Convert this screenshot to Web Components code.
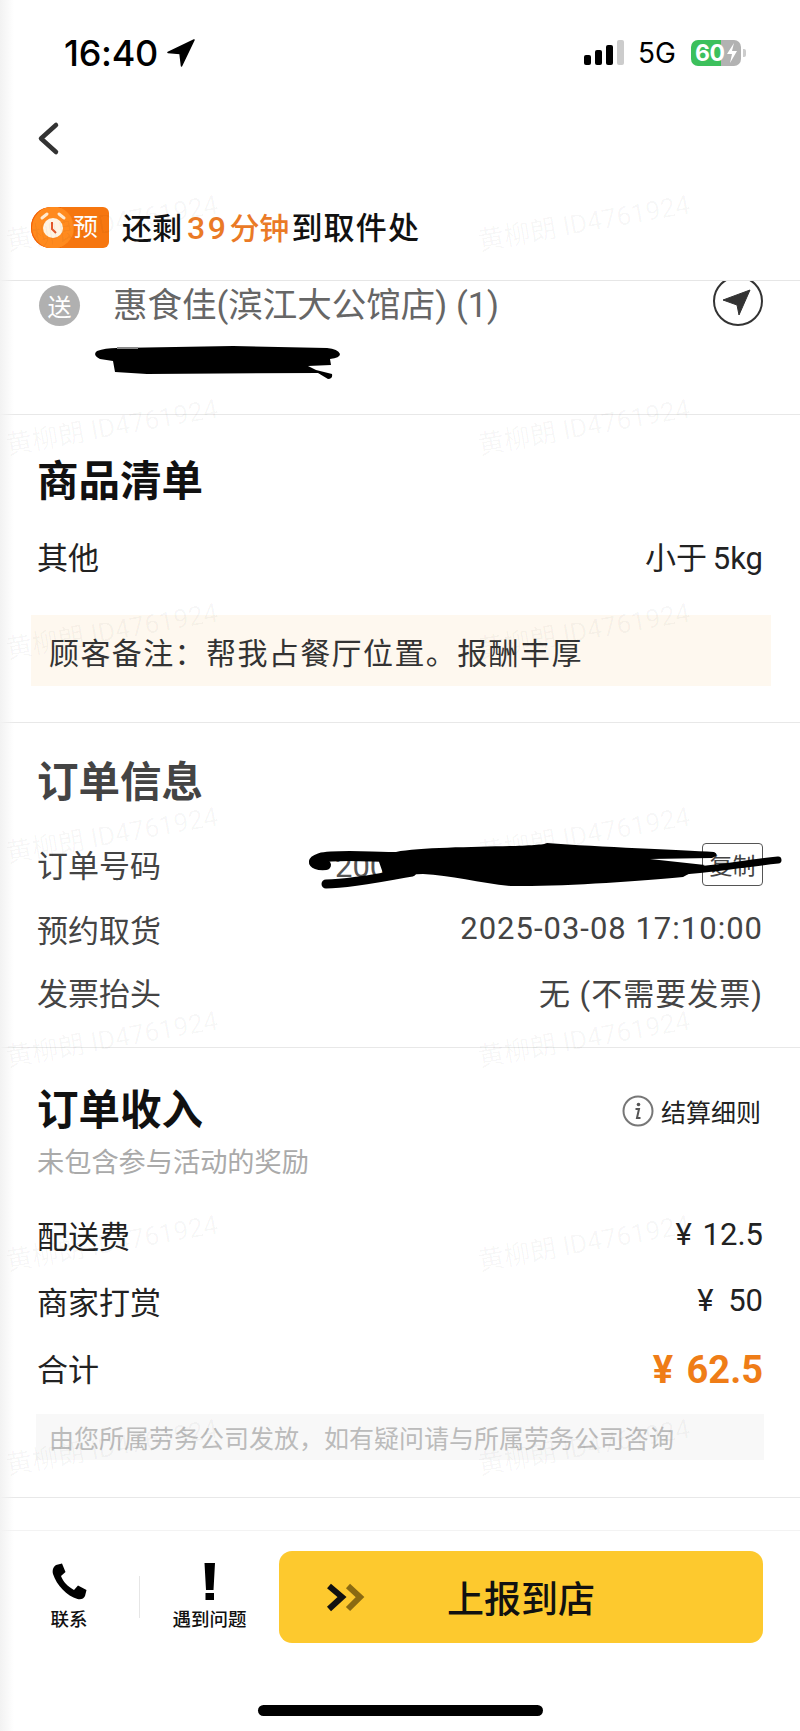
<!DOCTYPE html>
<html lang="zh-CN">
<head>
<meta charset="utf-8">
<title>订单详情</title>
<style>
    html, body { margin: 0; padding: 0; background: #fff; }
    body {
        width: 800px;
        height: 1731px;
        overflow: hidden;
        position: relative;
        font-family: Roboto, "Noto Sans CJK SC", sans-serif;
        color: #222;
    }
    .order-value { display: flex; align-items: center; justify-content: space-between; width: 428px; }
    .order-value span { color: #555; padding-top: 6px; }
    .order-value copy-chip { margin-top: 2px; }
</style>
</head>
<body>
<status-bar></status-bar>
<back-nav></back-nav>
<eta-banner></eta-banner>
<store-row></store-row>

<info-section heading="商品清单" pad-top="42" pad-bottom="36">
    <kv-row label="其他" height="50" style="margin-top:23px;--ws:-2px">小于 5kg</kv-row>
    <note-box>顾客备注：帮我占餐厅位置。报酬丰厚</note-box>
</info-section>

<info-section heading="订单信息" pad-top="35" pad-bottom="25" muted>
    <kv-row label="订单号码" height="66" style="margin-top:22px">
        <div class="order-value"><span>200</span><copy-chip>复制</copy-chip></div>
        <ink-mark view="305 840 480 55" w="480" h="55" x="268" y="9" kind="order"></ink-mark>
    </kv-row>
    <kv-row label="预约取货" style="--ls:1px">2025-03-08 17:10:00</kv-row>
    <kv-row label="发票抬头" height="62" style="--ls:1px">无 (不需要发票)</kv-row>
</info-section>

<info-section heading="订单收入" pad-top="38" pad-bottom="37">
    <settle-link slot="aside">结算细则</settle-link>
    <sub-note>未包含参与活动的奖励</sub-note>
    <kv-row label="配送费" height="66" style="margin-top:18px;--ws:3px">¥ 12.5</kv-row>
    <kv-row label="商家打赏" height="67" style="--ws:7px">¥ 50</kv-row>
    <kv-row label="合计" height="67" total style="--ws:4px">¥ 62.5</kv-row>
    <pay-notice>由您所属劳务公司发放，如有疑问请与所属劳务公司咨询</pay-notice>
</info-section>

<action-bar></action-bar>
<home-bar></home-bar>
<water-marks></water-marks>

<script>
class StatusBar extends HTMLElement {
    constructor() {
        super();
        this.attachShadow({ mode: 'open' });
    }
    connectedCallback() {
        this.shadowRoot.innerHTML = `
            <style>
                :host { display: flex; align-items: center; height: 105px; padding: 0 54px 0 64px; font-family: Inter, Roboto, sans-serif; color: #000; }
                .time { font-size: 36px; font-weight: 500; letter-spacing: -0.3px; }
                .loc { margin-left: 9px; }
                .right { margin-left: auto; display: flex; align-items: center; }
                .bars { display: flex; align-items: flex-end; gap: 4px; height: 25px; }
                .bars i { display: block; width: 7px; background: #000; border-radius: 2px; }
                .net { margin: 0 15px 0 14px; font-size: 28px; font-weight: 400; }
                .batt { position: relative; width: 50px; height: 26px; border-radius: 7px; overflow: hidden; display: flex; align-items: center; background: linear-gradient(to right, #3cc05c 60%, #b2b2b2 60%); color: #fff; font-size: 23px; font-weight: 700; }
                .batt span { margin-left: 4px; letter-spacing: -0.5px; }
                .nub { width: 3px; height: 8px; margin-left: 2px; background: #ccc; border-radius: 0 2px 2px 0; }
            </style>
            <span class="time">16:40</span>
            <svg class="loc" width="28" height="28" viewBox="0 0 28 28"><path d="M27 1 L1 13.5 L13 14.5 L14.5 27 Z" fill="#000" stroke="#000" stroke-width="1.5" stroke-linejoin="round"/></svg>
            <div class="right">
                <div class="bars">
                    <i style="height:10px"></i><i style="height:15px"></i><i style="height:20px"></i><i style="height:25px;background:#ccc"></i>
                </div>
                <span class="net">5G</span>
                <div class="batt"><span>60</span>
                    <svg width="14" height="22" viewBox="0 0 14 22" style="margin-left:1px"><path d="M9 1 L2 12 H7 L5 21 L12 9 H7 Z" fill="#fff"/></svg>
                </div>
                <div class="nub"></div>
            </div>
        `;
    }
}

class BackNav extends HTMLElement {
    constructor() {
        super();
        this.attachShadow({ mode: 'open' });
    }
    connectedCallback() {
        this.shadowRoot.innerHTML = `
            <style>
                :host { display: flex; align-items: center; height: 66px; padding-left: 36px; }
            </style>
            <svg width="24" height="36" viewBox="0 0 24 36"><path d="M20 5 L5 18.5 L20 32" fill="none" stroke="#333" stroke-width="4.5" stroke-linecap="round" stroke-linejoin="round"/></svg>
        `;
    }
}

class EtaBanner extends HTMLElement {
    constructor() {
        super();
        this.attachShadow({ mode: 'open' });
    }
    connectedCallback() {
        this.shadowRoot.innerHTML = `
            <style>
                :host { display: flex; align-items: center; height: 109px; padding: 0 0 0 31px; border-bottom: 1px solid #e6e6e6; font-size: 30px; font-weight: 500; color: #111; }
                .badge { position: relative; overflow: hidden; display: flex; align-items: center; width: 78px; height: 41px; margin-top: 4px; border-radius: 20px 6px 6px 20px; background: #f6760f; color: #fff; margin-right: 13px; }
                .badge svg { position: absolute; left: 0; top: 0; }
                .badge span { position: relative; margin-left: 42px; font-size: 25px; font-weight: 400; line-height: 41px; }
                em { font-style: normal; color: #ea7a26; }
                .num { font-size: 32px; letter-spacing: 2.5px; margin: 0 1px 0 5px; }
                .rest { font-size: 31px; letter-spacing: 1.2px; margin-left: 2px; }
            </style>
            <div class="badge">
                <svg width="78" height="41" viewBox="0 0 78 41">
                    <rect x="0" y="0" width="30" height="41" fill="#f35f04"/>
                    <circle cx="22" cy="20.5" r="21" fill="#ff8a1e"/>
                    <path d="M11 11 L16 7 M33 11 L28 7" stroke="#ffe9cf" stroke-width="3" stroke-linecap="round"/>
                    <circle cx="22" cy="21" r="10" fill="#fff3e2"/>
                    <path d="M21 15 V22 L25 26" fill="none" stroke="#e4572a" stroke-width="2"/>
                </svg>
                <span>预</span>
            </div>
            <span>还剩<em><span class="num">39</span>分钟</em><span class="rest">到取件处</span></span>
        `;
    }
}

class InkMark extends HTMLElement {
    constructor() {
        super();
        this.attachShadow({ mode: 'open' });
    }
    connectedCallback() {
        const w = this.getAttribute('w');
        const h = this.getAttribute('h');
        const shapes = {
            order: `
                <path d="M396 853 C430 846 540 849 547 844 C600 848 680 851 714 853 Q720 856 712 859 L650 860 L705 866 L683 878 C640 882 560 888 510 887 C480 884 450 876 423 875 C405 875 395 878 385 880 L378 860 Z" fill="#000"/>
                <path d="M400 858 C370 858 335 855 320 859 C310 862 313 867 326 866" fill="none" stroke="#000" stroke-width="10" stroke-linecap="round"/>
                <path d="M326 885 C350 885 385 878 412 873" fill="none" stroke="#000" stroke-width="9" stroke-linecap="round"/>
                <path d="M670 873 C710 871 740 865 778 861" fill="none" stroke="#000" stroke-width="7" stroke-linecap="round"/>
            `,
            name: `
                <path d="M97 350 Q105 347 117 347 L233 345 L327 347 Q338 348 340 353 Q340 357 330 358 L331 364 L308 365 L316 369 L332 373 Q333 378 328 378 L318 372 L147 373 L115 371 L113 360 L100 358 Q92 354 97 350 Z" fill="#000"/>
                <rect x="117" y="346" width="21" height="2" fill="#888"/>
            `
        };
        this.shadowRoot.innerHTML = `
            <style>
                :host { position: absolute; left: ${this.getAttribute('x')}px; top: ${this.getAttribute('y')}px; display: block; width: ${w}px; height: ${h}px; }
                svg { display: block; }
            </style>
            <svg width="${w}" height="${h}" viewBox="${this.getAttribute('view')}">${shapes[this.getAttribute('kind')]}</svg>
        `;
    }
}

class StoreRow extends HTMLElement {
    constructor() {
        super();
        this.attachShadow({ mode: 'open' });
    }
    connectedCallback() {
        this.shadowRoot.innerHTML = `
            <style>
                :host { position: relative; display: block; height: 133px; border-bottom: 1px solid #e8e8e8; overflow: hidden; color: #666; }
                .top { display: flex; align-items: center; height: 46px; padding: 1px 37px 0 39px; }
                .tag { flex: none; display: flex; align-items: center; justify-content: center; width: 41px; height: 41px; border-radius: 50%; background: #b0b0b0; color: #fff; font-size: 24px; margin-right: 33px; }
                .name { font-size: 34.5px; line-height: 46px; white-space: nowrap; }
                .go { position: absolute; right: 36px; top: -5px; }
            </style>
            <div class="top">
                <div class="tag">送</div>
                <div class="name">惠食佳(滨江大公馆店) (1)</div>
            </div>
            <svg class="go" width="52" height="52" viewBox="0 0 52 52">
                <circle cx="26" cy="25" r="24" fill="#fff" stroke="#333" stroke-width="2"/>
                <path d="M38 14 L11 24 L25 29 L27 39 Z" fill="#333" stroke="#333" stroke-width="1" stroke-linejoin="round"/>
            </svg>
            <ink-mark view="90 340 255 42" w="255" h="42" x="90" y="60" kind="name"></ink-mark>
        `;
    }
}

class InfoSection extends HTMLElement {
    constructor() {
        super();
        this.attachShadow({ mode: 'open' });
    }
    connectedCallback() {
        const top = this.getAttribute('pad-top') || 36;
        const bottom = this.getAttribute('pad-bottom') || 30;
        const muted = this.hasAttribute('muted');
        this.shadowRoot.innerHTML = `
            <style>
                :host { display: block; padding: ${top}px 37px ${bottom}px; border-bottom: 1px solid #e8e8e8; color: ${muted ? '#444' : '#222'}; }
                .head { display: flex; align-items: center; justify-content: space-between; height: 50px; }
                h2 { margin: 0; font-size: 41.5px; font-weight: 700; line-height: 50px; color: ${muted ? '#444' : '#111'}; }
            </style>
            <div class="head">
                <h2>${this.getAttribute('heading')}</h2>
                <slot name="aside"></slot>
            </div>
            <slot></slot>
        `;
    }
}

class KvRow extends HTMLElement {
    constructor() {
        super();
        this.attachShadow({ mode: 'open' });
    }
    connectedCallback() {
        const total = this.hasAttribute('total');
        this.shadowRoot.innerHTML = `
            <style>
                :host { position: relative; display: flex; align-items: center; justify-content: space-between; height: ${this.getAttribute('height') || 64}px; font-size: 31px; white-space: nowrap; }
                .value { letter-spacing: var(--ls, 0); word-spacing: var(--ws, 0); ${total ? 'color:#ef7d17;font-size:38px;font-weight:700;padding-top:4px;' : ''} }
            </style>
            <span>${this.getAttribute('label')}</span>
            <span class="value"><slot></slot></span>
        `;
    }
}

class NoteBox extends HTMLElement {
    constructor() {
        super();
        this.attachShadow({ mode: 'open' });
    }
    connectedCallback() {
        this.shadowRoot.innerHTML = `
            <style>
                :host { display: flex; align-items: center; height: 71px; margin: 35px -8px 0 -6px; padding-left: 18px; background: #fef8ef; font-size: 30px; letter-spacing: 1.4px; color: #333; }
            </style>
            <slot></slot>
        `;
    }
}

class CopyChip extends HTMLElement {
    constructor() {
        super();
        this.attachShadow({ mode: 'open' });
    }
    connectedCallback() {
        this.shadowRoot.innerHTML = `
            <style>
                :host { display: flex; align-items: center; justify-content: center; box-sizing: border-box; width: 61px; height: 43px; border: 1px solid #555; border-radius: 4px; font-size: 23px; color: #444; }
            </style>
            <slot></slot>
        `;
    }
}

class SettleLink extends HTMLElement {
    constructor() {
        super();
        this.attachShadow({ mode: 'open' });
    }
    connectedCallback() {
        this.shadowRoot.innerHTML = `
            <style>
                :host { display: flex; align-items: center; margin-right: 2px; font-size: 25px; color: #222; }
                svg { margin-right: 7px; }
            </style>
            <svg width="32" height="32" viewBox="0 0 32 32">
                <circle cx="16" cy="16" r="14.5" fill="none" stroke="#777" stroke-width="2"/>
                <circle cx="16.5" cy="9.5" r="1.8" fill="#555"/>
                <path d="M13.5 14 H17 L15 23 H18.5" fill="none" stroke="#555" stroke-width="2"/>
            </svg>
            <slot></slot>
        `;
    }
}

class SubNote extends HTMLElement {
    constructor() {
        super();
        this.attachShadow({ mode: 'open' });
    }
    connectedCallback() {
        this.shadowRoot.innerHTML = `
            <style>
                :host { display: block; margin-top: 7px; height: 40px; font-size: 27.2px; line-height: 40px; color: #aaa; }
            </style>
            <slot></slot>
        `;
    }
}

class PayNotice extends HTMLElement {
    constructor() {
        super();
        this.attachShadow({ mode: 'open' });
    }
    connectedCallback() {
        this.shadowRoot.innerHTML = `
            <style>
                :host { display: flex; align-items: center; height: 46px; margin: 13px -1px 0; padding-left: 13px; background: #f8f8f8; font-size: 25px; color: #bbb; white-space: nowrap; }
            </style>
            <slot></slot>
        `;
    }
}

class ActionBar extends HTMLElement {
    constructor() {
        super();
        this.attachShadow({ mode: 'open' });
    }
    connectedCallback() {
        this.shadowRoot.innerHTML = `
            <style>
                :host { display: flex; align-items: center; height: 113px; margin-top: 32px; padding: 9px 37px 0 0; border-top: 1px solid #f3f3f3; color: #111; }
                .item { display: flex; flex-direction: column; align-items: center; font-size: 18.5px; font-weight: 500; line-height: 24px; }
                .item svg { display: block; margin: 2px 0 7px; }
                .call { width: 138px; }
                .issue { width: 139px; }
                .sep { flex: none; width: 1px; height: 42px; margin-left: 1px; background: #e6e6e6; }
                .go { flex: 1; position: relative; display: flex; align-items: center; justify-content: center; height: 92px; border-radius: 13px; background: #fdc92e; font-size: 37px; font-weight: 500; }
                .go svg { position: absolute; left: 45px; top: 32px; margin: 0; }
            </style>
            <div class="item call">
                <svg width="38" height="38" viewBox="0 0 38 38"><path d="M6 2 L12 0.5 L15.5 9 L11 13 C13 18.5 17.5 23.5 24 27 L28 22.5 L36.5 27 L35 33 C34 35.5 31 37 27.5 36 C17 33 6.5 22 3 11 C2 7 3.5 3.5 6 2 Z" fill="#000"/></svg>
                <span>联系</span>
            </div>
            <div class="sep"></div>
            <div class="item issue">
                <svg width="14" height="38" viewBox="0 0 14 38"><path d="M1.5 0 H12 L10.5 27 H3 Z M2.5 30 H11 V37 H2.5 Z" fill="#000"/></svg>
                <span>遇到问题</span>
            </div>
            <div class="go">
                <svg width="42" height="30" viewBox="0 0 42 30">
                    <path d="M24 3 L36 14 L24 26" fill="none" stroke="#8a6a12" stroke-width="6"/>
                    <path d="M5 3 L18 14 L5 26" fill="none" stroke="#111" stroke-width="6"/>
                </svg>
                <span>上报到店</span>
            </div>
        `;
    }
}

class HomeBar extends HTMLElement {
    constructor() {
        super();
        this.attachShadow({ mode: 'open' });
    }
    connectedCallback() {
        this.shadowRoot.innerHTML = `
            <style>
                :host { display: block; width: 285px; height: 11px; margin: 52px auto 0; border-radius: 6px; background: #000; }
            </style>
        `;
    }
}

// Watermark stamps and the faint shade down the left edge, laid over the whole page
class WaterMarks extends HTMLElement {
    constructor() {
        super();
        this.attachShadow({ mode: 'open' });
    }
    connectedCallback() {
        let stamps = '';
        for (let i = 0; i < 7; i++) {
            const y = 201 + i * 204;
            stamps += `<span style="left:4px;top:${y}px">黄柳朗 ID4761924</span>`;
            stamps += `<span style="left:476px;top:${y}px">黄柳朗 ID4761924</span>`;
        }
        this.shadowRoot.innerHTML = `
            <style>
                :host { position: absolute; left: 0; top: 0; width: 800px; height: 1731px; pointer-events: none; overflow: hidden; }
                span { position: absolute; transform: rotate(-10deg); font-size: 26.5px; white-space: nowrap; color: rgba(0, 0, 0, 0.035); }
                .edge { position: absolute; left: 0; top: 0; bottom: 0; width: 14px; background: linear-gradient(to right, #f2f2f2, rgba(242, 242, 242, 0)); }
            </style>
            <div class="edge"></div>
            ${stamps}
        `;
    }
}

customElements.define('status-bar', StatusBar);
customElements.define('back-nav', BackNav);
customElements.define('eta-banner', EtaBanner);
customElements.define('ink-mark', InkMark);
customElements.define('store-row', StoreRow);
customElements.define('info-section', InfoSection);
customElements.define('kv-row', KvRow);
customElements.define('note-box', NoteBox);
customElements.define('copy-chip', CopyChip);
customElements.define('settle-link', SettleLink);
customElements.define('sub-note', SubNote);
customElements.define('pay-notice', PayNotice);
customElements.define('action-bar', ActionBar);
customElements.define('home-bar', HomeBar);
customElements.define('water-marks', WaterMarks);
</script>
</body>
</html>
